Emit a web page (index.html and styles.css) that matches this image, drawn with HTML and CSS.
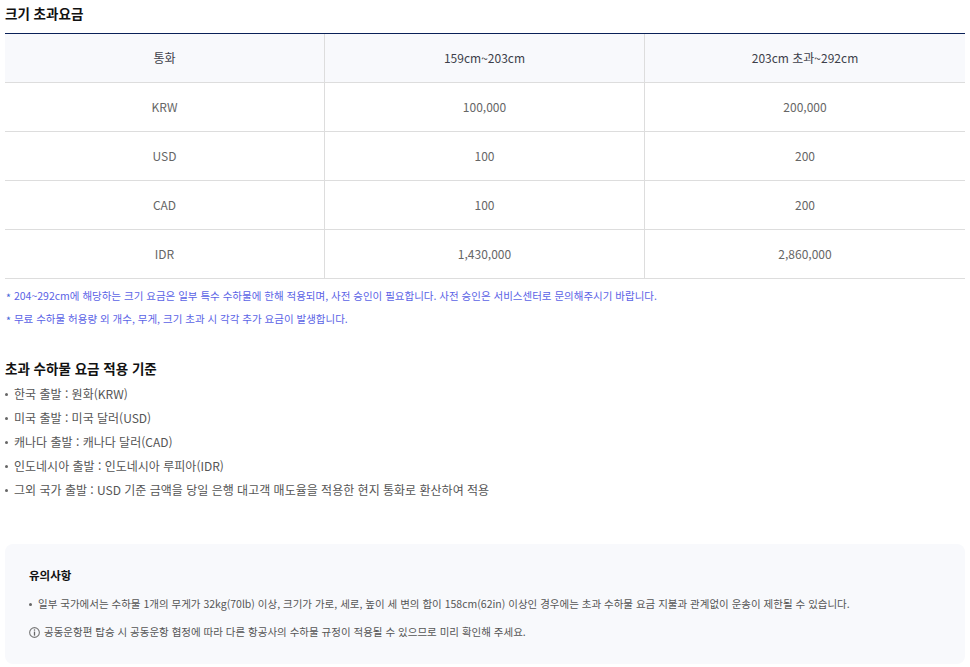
FILE: index.html
```html
<!DOCTYPE html>
<html lang="ko">
<head>
<meta charset="utf-8">
<title>크기 초과요금</title>
<link rel="stylesheet" href="styles.css">
</head>
<body>
<h3 class="title">크기 초과요금</h3>
<table class="fees">
  <thead>
    <tr><th>통화</th><th>159cm~203cm</th><th>203cm 초과~292cm</th></tr>
  </thead>
  <tbody>
    <tr><td>KRW</td><td>100,000</td><td>200,000</td></tr>
    <tr><td>USD</td><td>100</td><td>200</td></tr>
    <tr><td>CAD</td><td>100</td><td>200</td></tr>
    <tr><td>IDR</td><td>1,430,000</td><td>2,860,000</td></tr>
  </tbody>
</table>
<ul class="notes">
  <li>204~292cm에 해당하는 크기 요금은 일부 특수 수하물에 한해 적용되며, 사전 승인이 필요합니다. 사전 승인은 서비스센터로 문의해주시기 바랍니다.</li>
  <li>무료 수하물 허용량 외 개수, 무게, 크기 초과 시 각각 추가 요금이 발생합니다.</li>
</ul>
<h3 class="subtitle">초과 수하물 요금 적용 기준</h3>
<ul class="rules">
  <li>한국 출발 : 원화(KRW)</li>
  <li>미국 출발 : 미국 달러(USD)</li>
  <li>캐나다 출발 : 캐나다 달러(CAD)</li>
  <li>인도네시아 출발 : 인도네시아 루피아(IDR)</li>
  <li>그외 국가 출발 : USD 기준 금액을 당일 은행 대고객 매도율을 적용한 현지 통화로 환산하여 적용</li>
</ul>
<section class="notice">
  <h4 class="notice-title">유의사항</h4>
  <p class="notice-item">일부 국가에서는 수하물 1개의 무게가 32kg(70lb) 이상, 크기가 가로, 세로, 높이 세 변의 합이 158cm(62in) 이상인 경우에는 초과 수하물 요금 지불과 관계없이 운송이 제한될 수 있습니다.</p>
  <p class="notice-info">
    <svg class="info-icon" viewBox="0 0 12 12" width="11" height="11" aria-hidden="true"><circle cx="6" cy="6" r="5.3" fill="none" stroke="#777" stroke-width="1.2"/><rect x="5.3" y="2.6" width="1.4" height="1.4" fill="#666"/><rect x="5.3" y="5" width="1.4" height="4.4" fill="#666"/></svg>
    <span>공동운항편 탑승 시 공동운항 협정에 따라 다른 항공사의 수하물 규정이 적용될 수 있으므로 미리 확인해 주세요.</span>
  </p>
</section>
</body>
</html>
```
FILE: styles.css
```css
* { box-sizing: border-box; }
html, body { margin: 0; padding: 0; }
body {
  width: 970px;
  height: 667px;
  overflow: hidden;
  padding: 0 5px;
  background: #fff;
  color: #555;
  font-family: "Noto Sans CJK KR", "Noto Sans", sans-serif;
  font-size: 12px;
}
.title {
  margin: 0;
  height: 33px;
  padding-top: 3px;
  font-size: 13.5px;
  line-height: 21px;
  font-weight: 700;
  color: #111;
}
.fees {
  width: 960px;
  table-layout: fixed;
  border-collapse: separate;
  border-spacing: 0;
  border-top: 1px solid #0a2158;
  font-size: 12px;
}
.fees th, .fees td {
  height: 49px;
  padding: 0 0 2px;
  text-align: center;
  font-weight: 400;
  border-bottom: 1px solid #ddd;
  border-right: 1px solid #ddd;
}
.fees th:last-child, .fees td:last-child { border-right: 0; }
.fees th { background: #f8f9fc; color: #3d3f4a; }
.fees td { color: #666; }
.notes {
  list-style: none;
  margin: 5px 0 0;
  padding: 0;
  color: #5b63e6;
  font-size: 10.5px;
  line-height: 23px;
}
.notes li::before {
  content: "*";
  display: inline-block;
  margin: 0 3px 0 1px;
  color: #3f62d8;
  transform: translateY(2px);
}
.subtitle {
  margin: 28px 0 0;
  font-size: 13.5px;
  line-height: 20px;
  font-weight: 700;
  color: #111;
}
.rules {
  list-style: none;
  margin: 4px 0 0;
  padding: 0;
  font-size: 12px;
  line-height: 24px;
  color: #555;
}
.rules li { display: flex; align-items: center; gap: 6px; }
.rules li::before {
  content: "";
  width: 3px;
  height: 3px;
  border-radius: 50%;
  background: #666;
}
.notice {
  margin-top: 42px;
  height: 120px;
  padding: 21px 24px 0;
  border-radius: 8px;
  background: #f8f9fc;
  font-size: 10.5px;
  color: #555;
}
.notice-title {
  margin: 0;
  font-size: 11.5px;
  line-height: 20px;
  font-weight: 700;
  color: #111;
}
.notice-item {
  display: flex;
  align-items: center;
  gap: 6px;
  margin: 9px 0 0;
  line-height: 20px;
}
.notice-item::before {
  content: "";
  width: 3px;
  height: 3px;
  border-radius: 50%;
  background: #666;
}
.notice-info {
  display: flex;
  align-items: center;
  gap: 4px;
  margin: 8px 0 0;
  line-height: 20px;
}
```
